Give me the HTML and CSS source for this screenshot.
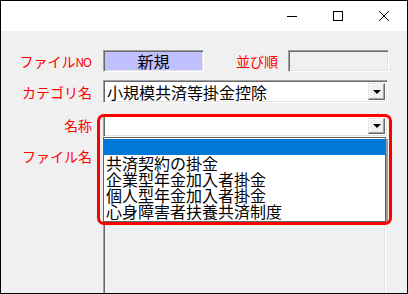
FILE: index.html
```html
<!DOCTYPE html>
<html lang="ja">
<head>
<meta charset="utf-8">
<title>ファイル</title>
<link rel="stylesheet" href="styles.css">
</head>
<body>
<div class="window">
  <div class="titlebar">
    <div class="tbtn">
      <svg width="10" height="10" viewBox="0 0 10 10"><path d="M0 5.5H10" stroke="#000" stroke-width="1"/></svg>
    </div>
    <div class="tbtn">
      <svg width="10" height="10" viewBox="0 0 10 10"><rect x="0.5" y="0.5" width="9" height="9" fill="none" stroke="#000" stroke-width="1"/></svg>
    </div>
    <div class="tbtn">
      <svg width="10" height="10" viewBox="0 0 10 10"><path d="M0 0L10 10M10 0L0 10" stroke="#000" stroke-width="1"/></svg>
    </div>
  </div>
  <div class="content">
    <div class="row row1">
      <div class="label">ファイル<span class="narrow">NO</span></div>
      <div class="field box-new">新規</div>
      <div class="label2">並び順</div>
      <div class="field box-order"></div>
    </div>
    <div class="row row2">
      <div class="label">カテゴリ名</div>
      <div class="field combo">
        <span class="combo-text">小規模共済等掛金控除</span>
        <span class="dropbtn"><span class="arrow"></span></span>
      </div>
    </div>
    <div class="row row3">
      <div class="label">名称</div>
      <div class="field combo combo3">
        <span class="combo-text"></span>
        <span class="dropbtn"><span class="arrow"></span></span>
      </div>
    </div>
    <div class="row row4">
      <div class="label label-top">ファイル名</div>
      <div class="field bigbox"></div>
    </div>
  </div>
  <ul class="droplist">
    <li class="item selected">&nbsp;</li>
    <li class="item">共済契約の掛金</li>
    <li class="item">企業型年金加入者掛金</li>
    <li class="item">個人型年金加入者掛金</li>
    <li class="item">心身障害者扶養共済制度</li>
  </ul>
  <div class="highlight"></div>
</div>
</body>
</html>
```
FILE: styles.css
```css
html, body {
  margin: 0;
  padding: 0;
  background: #ffffff;
}
body {
  font-family: "Noto Sans CJK JP", "Noto Sans", sans-serif;
}
.window {
  position: relative;
  width: 408px;
  height: 294px;
  box-sizing: border-box;
  border: 1px solid #000;
  overflow: hidden;
  background: #f0f0f0;
}
.titlebar {
  height: 30px;
  background: #fff;
  display: flex;
  justify-content: flex-end;
}
.tbtn {
  width: 46px;
  height: 30px;
  display: flex;
  align-items: center;
  justify-content: center;
}
.tbtn svg {
  display: block;
  shape-rendering: crispEdges;
}
.content {
  padding-top: 19px;
  display: flex;
  flex-direction: column;
}
.row {
  display: flex;
  align-items: center;
}
.row1 { height: 22px; }
.row2 { height: 23px; margin-top: 8px; }
.row3 { height: 22px; margin-top: 12px; }
.row4 { margin-top: 6px; align-items: flex-start; }
.label {
  width: 91px;
  margin-right: 11px;
  text-align: right;
  color: #ff0000;
  font-size: 14px;
  line-height: 16px;
  white-space: nowrap;
}
.label-top {
  padding-top: 5px;
}
.narrow {
  font-size: 12px;
  letter-spacing: -1px;
  margin-right: 1px;
}
.row3 .label {
  margin-top: -3px;
}
.label2 {
  width: 74px;
  margin-right: 10px;
  text-align: right;
  color: #ff0000;
  font-size: 14px;
  line-height: 16px;
  white-space: nowrap;
}
.field {
  box-sizing: border-box;
  height: 100%;
  border: 1px solid;
  border-color: #a0a0a0 #ffffff #ffffff #a0a0a0;
  box-shadow: inset 1px 1px 0 #696969, inset -1px -1px 0 #e3e3e3;
}
.box-new {
  width: 101px;
  background: #c0c0ff;
  text-align: center;
  font-size: 16px;
  line-height: 20px;
  color: #000;
}
.box-order {
  width: 101px;
  background: #f0f0f0;
}
.combo {
  width: 285px;
  background: #fff;
  display: flex;
  align-items: center;
  padding: 2px;
}
.combo-text {
  flex: 1;
  font-size: 16px;
  line-height: 16px;
  padding-left: 1px;
  color: #000;
  white-space: nowrap;
}
.dropbtn {
  width: 17px;
  height: 100%;
  box-sizing: border-box;
  background: #f0f0f0;
  border: 1px solid;
  border-color: #e3e3e3 #696969 #696969 #e3e3e3;
  box-shadow: inset -1px -1px 0 #a0a0a0, inset 1px 1px 0 #fff;
  display: flex;
  align-items: center;
  justify-content: center;
}
.arrow {
  width: 0;
  height: 0;
  border-left: 4px solid transparent;
  border-right: 4px solid transparent;
  border-top: 4px solid #000;
}
.bigbox {
  width: 283px;
  height: 200px;
  background: #f0f0f0;
}
.droplist {
  position: absolute;
  left: 102px;
  top: 136px;
  width: 283px;
  box-sizing: border-box;
  margin: 0;
  padding: 1px 0 2px 0;
  list-style: none;
  background: #fff;
  border: 1px solid #646464;
  box-shadow: 2px 2px 0 #9a9a9a;
}
.item {
  height: 16px;
  line-height: 16px;
  font-size: 16px;
  padding-left: 2px;
  color: #000;
  white-space: nowrap;
}
.item.selected {
  background: #0078d7;
  color: #fff;
}
.highlight {
  position: absolute;
  left: 96px;
  top: 113px;
  width: 295px;
  height: 111px;
  box-sizing: border-box;
  border: 3px solid #ff0000;
  border-radius: 7px;
}
```
